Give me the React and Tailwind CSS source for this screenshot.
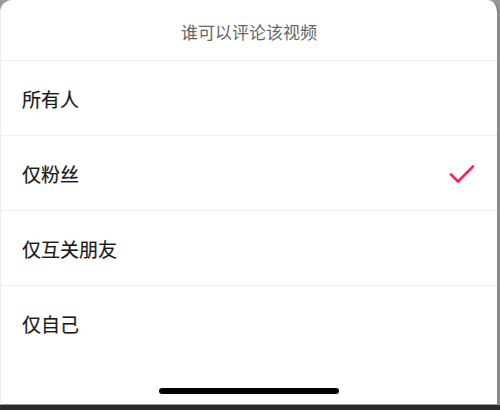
import React, { useState } from 'react';

const options = ['所有人', '仅粉丝', '仅互关朋友', '仅自己'];

const Check = () => (
  <svg width="26" height="22" viewBox="0 0 26 22" fill="none">
    <path d="M2 11.5 L9 18.5 L24 3.5" stroke="#f2255a" strokeWidth="2.6" strokeLinecap="round" strokeLinejoin="round" />
  </svg>
);

const App = () => {
  const [selected, setSelected] = useState(1);

  return (
    <div
      className="w-[500px] h-[410px] flex flex-col bg-[#9a9a9a] overflow-hidden"
      style={{ fontFamily: '"Noto Sans CJK SC", "Noto Sans", sans-serif' }}
    >
      <div className="flex-1 flex flex-col bg-white rounded-t-[12px] border-r-[3px] border-r-[#8a8a8a] border-l border-l-[#eeeeee] border-b border-b-[#9a9a9a]">
        <div className="h-[61px] flex items-center justify-center pt-[3px] border-b border-[#efefef]">
          <span className="text-[17px] text-[#666666]">谁可以评论该视频</span>
        </div>
        {options.map((label, i) => (
          <button
            key={label}
            onClick={() => setSelected(i)}
            className={`h-[75px] flex items-center justify-between pl-[21px] pr-[22px] pt-[2px] text-left ${i < options.length - 1 ? 'border-b border-[#efefef]' : ''}`}
          >
            <span className="text-[19px] font-normal text-[#1a1a1a] [-webkit-text-stroke:0.2px_#1a1a1a]">{label}</span>
            {selected === i && <Check />}
          </button>
        ))}
        <div className="flex-1 flex items-end justify-center pb-[10px]">
          <div className="w-[180px] h-[6px] rounded-full bg-black" />
        </div>
      </div>
      <div className="h-[5px] bg-[#2b2b2b]" />
    </div>
  );
};

export default App;
